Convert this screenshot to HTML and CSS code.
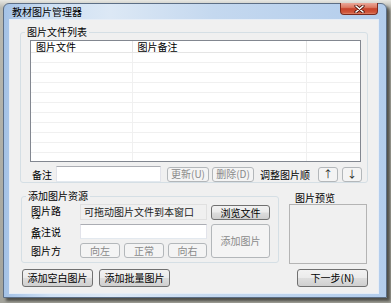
FILE: index.html
```html
<!DOCTYPE html>
<html lang="zh-CN">
<head>
    <meta charset="UTF-8">
    <meta name="viewport" content="width=device-width, initial-scale=1.0">
    <title>教材图片管理器</title>
    <link rel="stylesheet" href="styles.css">
</head>
<body>
    <div class="window">
        <div class="titlebar">
            <span class="title">教材图片管理器</span>
            <button class="close" title="关闭">
                <svg width="11" height="8" viewBox="0 0 11 8">
                    <path d="M2 1 L9 7 M9 1 L2 7" stroke="#4d150c" stroke-width="3.2" stroke-linecap="round"/>
                    <path d="M2 1 L9 7 M9 1 L2 7" stroke="#ffffff" stroke-width="1.6" stroke-linecap="round"/>
                </svg>
            </button>
        </div>

        <div class="client">
            <fieldset class="group list-group">
                <legend>图片文件列表</legend>
                <div class="listview">
                    <table>
                        <colgroup>
                            <col class="col-file">
                            <col class="col-note">
                            <col>
                        </colgroup>
                        <thead>
                            <tr><th>图片文件</th><th>图片备注</th><th></th></tr>
                        </thead>
                        <tbody>
                            <tr><td></td><td></td><td></td></tr>
                            <tr><td></td><td></td><td></td></tr>
                            <tr><td></td><td></td><td></td></tr>
                            <tr><td></td><td></td><td></td></tr>
                            <tr><td></td><td></td><td></td></tr>
                            <tr><td></td><td></td><td></td></tr>
                            <tr><td></td><td></td><td></td></tr>
                            <tr><td></td><td></td><td></td></tr>
                            <tr><td></td><td></td><td></td></tr>
                            <tr><td></td><td></td><td></td></tr>
                            <tr><td></td><td></td><td></td></tr>
                        </tbody>
                    </table>
                </div>
                <div class="note-row">
                    <span class="note-label">备注</span>
                    <input class="textbox note-input" type="text">
                    <button class="btn small" disabled>更新(U)</button>
                    <button class="btn small gap-3" disabled>删除(D)</button>
                    <span class="order-label">调整图片顺序</span>
                    <button class="btn arrow up">↑</button>
                    <button class="btn arrow down">↓</button>
                </div>
            </fieldset>

            <div class="middle">
                <fieldset class="group add-group">
                    <legend>添加图片资源</legend>
                    <div class="add-grid">
                        <span class="field-label row1">图片路径</span>
                        <div class="drop-field">可拖动图片文件到本窗口</div>
                        <button class="btn browse">浏览文件</button>

                        <span class="field-label row2">备注说明</span>
                        <input class="textbox" type="text">
                        <button class="btn add-btn" disabled>添加图片</button>

                        <span class="field-label row3">图片方向</span>
                        <div class="rotate-row">
                            <button class="btn rot" disabled>向左</button>
                            <button class="btn rot" disabled>正常</button>
                            <button class="btn rot" disabled>向右</button>
                        </div>
                    </div>
                </fieldset>

                <div class="preview">
                    <div class="preview-title">图片预览</div>
                    <div class="preview-box"></div>
                </div>
            </div>

            <div class="bottom-row">
                <button class="btn big">添加空白图片</button>
                <button class="btn big">添加批量图片</button>
                <button class="btn big next">下一步(N)</button>
            </div>
        </div>
    </div>
</body>
</html>
```

FILE: styles.css
```css
body {
    margin: 0;
    height: 303px;
    overflow: hidden;
    background: linear-gradient(to bottom, #e8e8e4 0, #b9b9b1 8px, #a3a39b 100%);
    font-family: "Noto Sans CJK SC", "Noto Sans", sans-serif;
    font-size: 10px;
    color: #000;
}
.window {
    margin: 3px 0 0 3px;
    width: 384px;
    height: 295px;
    box-sizing: border-box;
    padding: 0 8px 4px 6px;
    border: 1px solid #5c6e85;
    border-radius: 6px 6px 0 0;
    background: linear-gradient(to right, #a4c2e6 0, #cfe0f3 12%, #dce8f5 28%, #c4d8ef 55%, #b3cdec 100%);
    box-shadow: 3px 3px 3px rgba(50, 50, 44, 0.75);
    display: flex;
    flex-direction: column;
}
.titlebar {
    height: 16px;
    display: flex;
    justify-content: space-between;
    align-items: flex-start;
}
.title {
    padding-left: 2px;
    line-height: 16px;
    color: #000;
}
.close {
    width: 38px;
    height: 12px;
    margin-top: -1px;
    padding: 0;
    border: 1px solid #7a2a1e;
    border-top: none;
    border-radius: 0 0 4px 4px;
    background: linear-gradient(to bottom, #eaa799 0, #dc7a63 40%, #c8432b 52%, #d0563b 85%, #e0866c 100%);
    display: flex;
    align-items: center;
    justify-content: center;
}

.client {
    height: 273px;
    background: #f0f0f0;
    box-shadow: 0 0 0 1px #e6edf6;
    display: flex;
    flex-direction: column;
}

/* group boxes */
.group {
    margin: 0;
    padding: 0;
    min-width: 0;
    border: 1px solid #d5dfe5;
    border-radius: 3px;
}
.group legend {
    margin-left: 4px;
    padding: 0 2px;
    line-height: 12px;
}
.list-group {
    margin: 6px 10px 0 10px;
}

/* list view */
.listview {
    margin: 2px 0 0 9px;
    width: 331px;
    height: 122px;
    box-sizing: border-box;
    border: 1px solid #828790;
    background: #fff;
    overflow: hidden;
}
.listview table {
    width: 100%;
    border-collapse: collapse;
    table-layout: fixed;
}
.col-file {
    width: 101px;
}
.col-note {
    width: 174px;
}
.listview th {
    height: 11px;
    padding: 0 0 0 5px;
    line-height: 11px;
    font-weight: normal;
    text-align: left;
    border-right: 1px solid #e5e5e5;
    border-bottom: 1px solid #e5e5e5;
}
.listview td {
    height: 9px;
    padding: 0;
    font-size: 0;
    line-height: 0;
    border-right: 1px solid #f0f0f0;
    border-bottom: 1px solid #f0f0f0;
}
.listview th:last-child,
.listview td:last-child {
    border-right: none;
}

/* row under the list */
.note-row {
    margin: 4px 0 0 9px;
    height: 16px;
    display: flex;
    align-items: center;
}
.note-label {
    margin-left: 2px;
    width: 24px;
}
.textbox {
    box-sizing: border-box;
    margin: 0;
    padding: 0 2px;
    height: 15px;
    font: inherit;
    background: #fff;
    border: 1px solid;
    border-color: #abadb3 #e2e3ea #e3e9ef #e2e3ea;
}
.note-input {
    width: 105px;
    height: 16px;
}
.btn {
    box-sizing: border-box;
    margin: 0;
    padding: 0;
    height: 15px;
    font: inherit;
    line-height: 12px;
    color: #000;
    border: 1px solid #707070;
    border-radius: 3px;
    background: linear-gradient(to bottom, #f2f2f2 0, #ebebeb 48%, #dddddd 52%, #cfcfcf 100%);
}
.btn:disabled {
    color: #8a8a8a;
    border-color: #b3b7ba;
    background: #f4f4f4;
}
.small {
    width: 42px;
    margin-left: 6px;
}
.small.gap-3 {
    margin-left: 3px;
}
.order-label {
    margin-left: 6px;
    width: 50px;
    overflow: hidden;
    white-space: nowrap;
}
.arrow {
    width: 20px;
    color: #222;
    border-color: #b3b7ba;
    background: #f4f4f4;
}
.arrow.up {
    margin-left: 8px;
}
.arrow.down {
    margin-left: 4px;
}

/* middle area */
.middle {
    margin-top: 7px;
    display: flex;
    align-items: flex-start;
}
.add-group {
    margin-left: 11px;
    width: 258px;
    box-sizing: border-box;
    padding-bottom: 4px;
}
.add-grid {
    margin: 2px 0 0 9px;
    display: grid;
    grid-template-columns: 45px 127px 59px;
    grid-template-rows: 16px 15px 15px;
    column-gap: 4px;
    row-gap: 4px;
}
.field-label {
    width: 30px;
    height: 13px;
    margin-top: 2px;
    line-height: 9px;
    overflow: hidden;
}
.field-label.row2 {
    margin-top: 3px;
    height: 12px;
}
.field-label.row3 {
    margin-top: 3px;
    height: 11px;
}
.drop-field {
    box-sizing: border-box;
    height: 16px;
    padding-left: 3px;
    line-height: 14px;
    color: #222;
    border: 1px solid #e0e0e0;
    white-space: nowrap;
    overflow: hidden;
}
.browse {
    align-self: end;
}
.add-btn {
    grid-row: span 2;
    height: auto;
}
.rotate-row {
    display: flex;
    justify-content: space-between;
}
.rot {
    width: 40px;
}
.rot:last-child {
    width: 39px;
}

.preview {
    margin-left: 10px;
    width: 78px;
}
.preview-title {
    margin-top: 2px;
    padding-left: 6px;
    line-height: 12px;
}
.preview-box {
    height: 60px;
    box-sizing: border-box;
    border: 1px solid #b4b4b4;
}

/* bottom buttons */
.bottom-row {
    margin: 5px 10px 0 12px;
    display: flex;
}
.big {
    width: 71px;
    height: 18px;
}
.big + .big {
    margin-left: 6px;
}
.big.next {
    margin-left: auto;
}
```
